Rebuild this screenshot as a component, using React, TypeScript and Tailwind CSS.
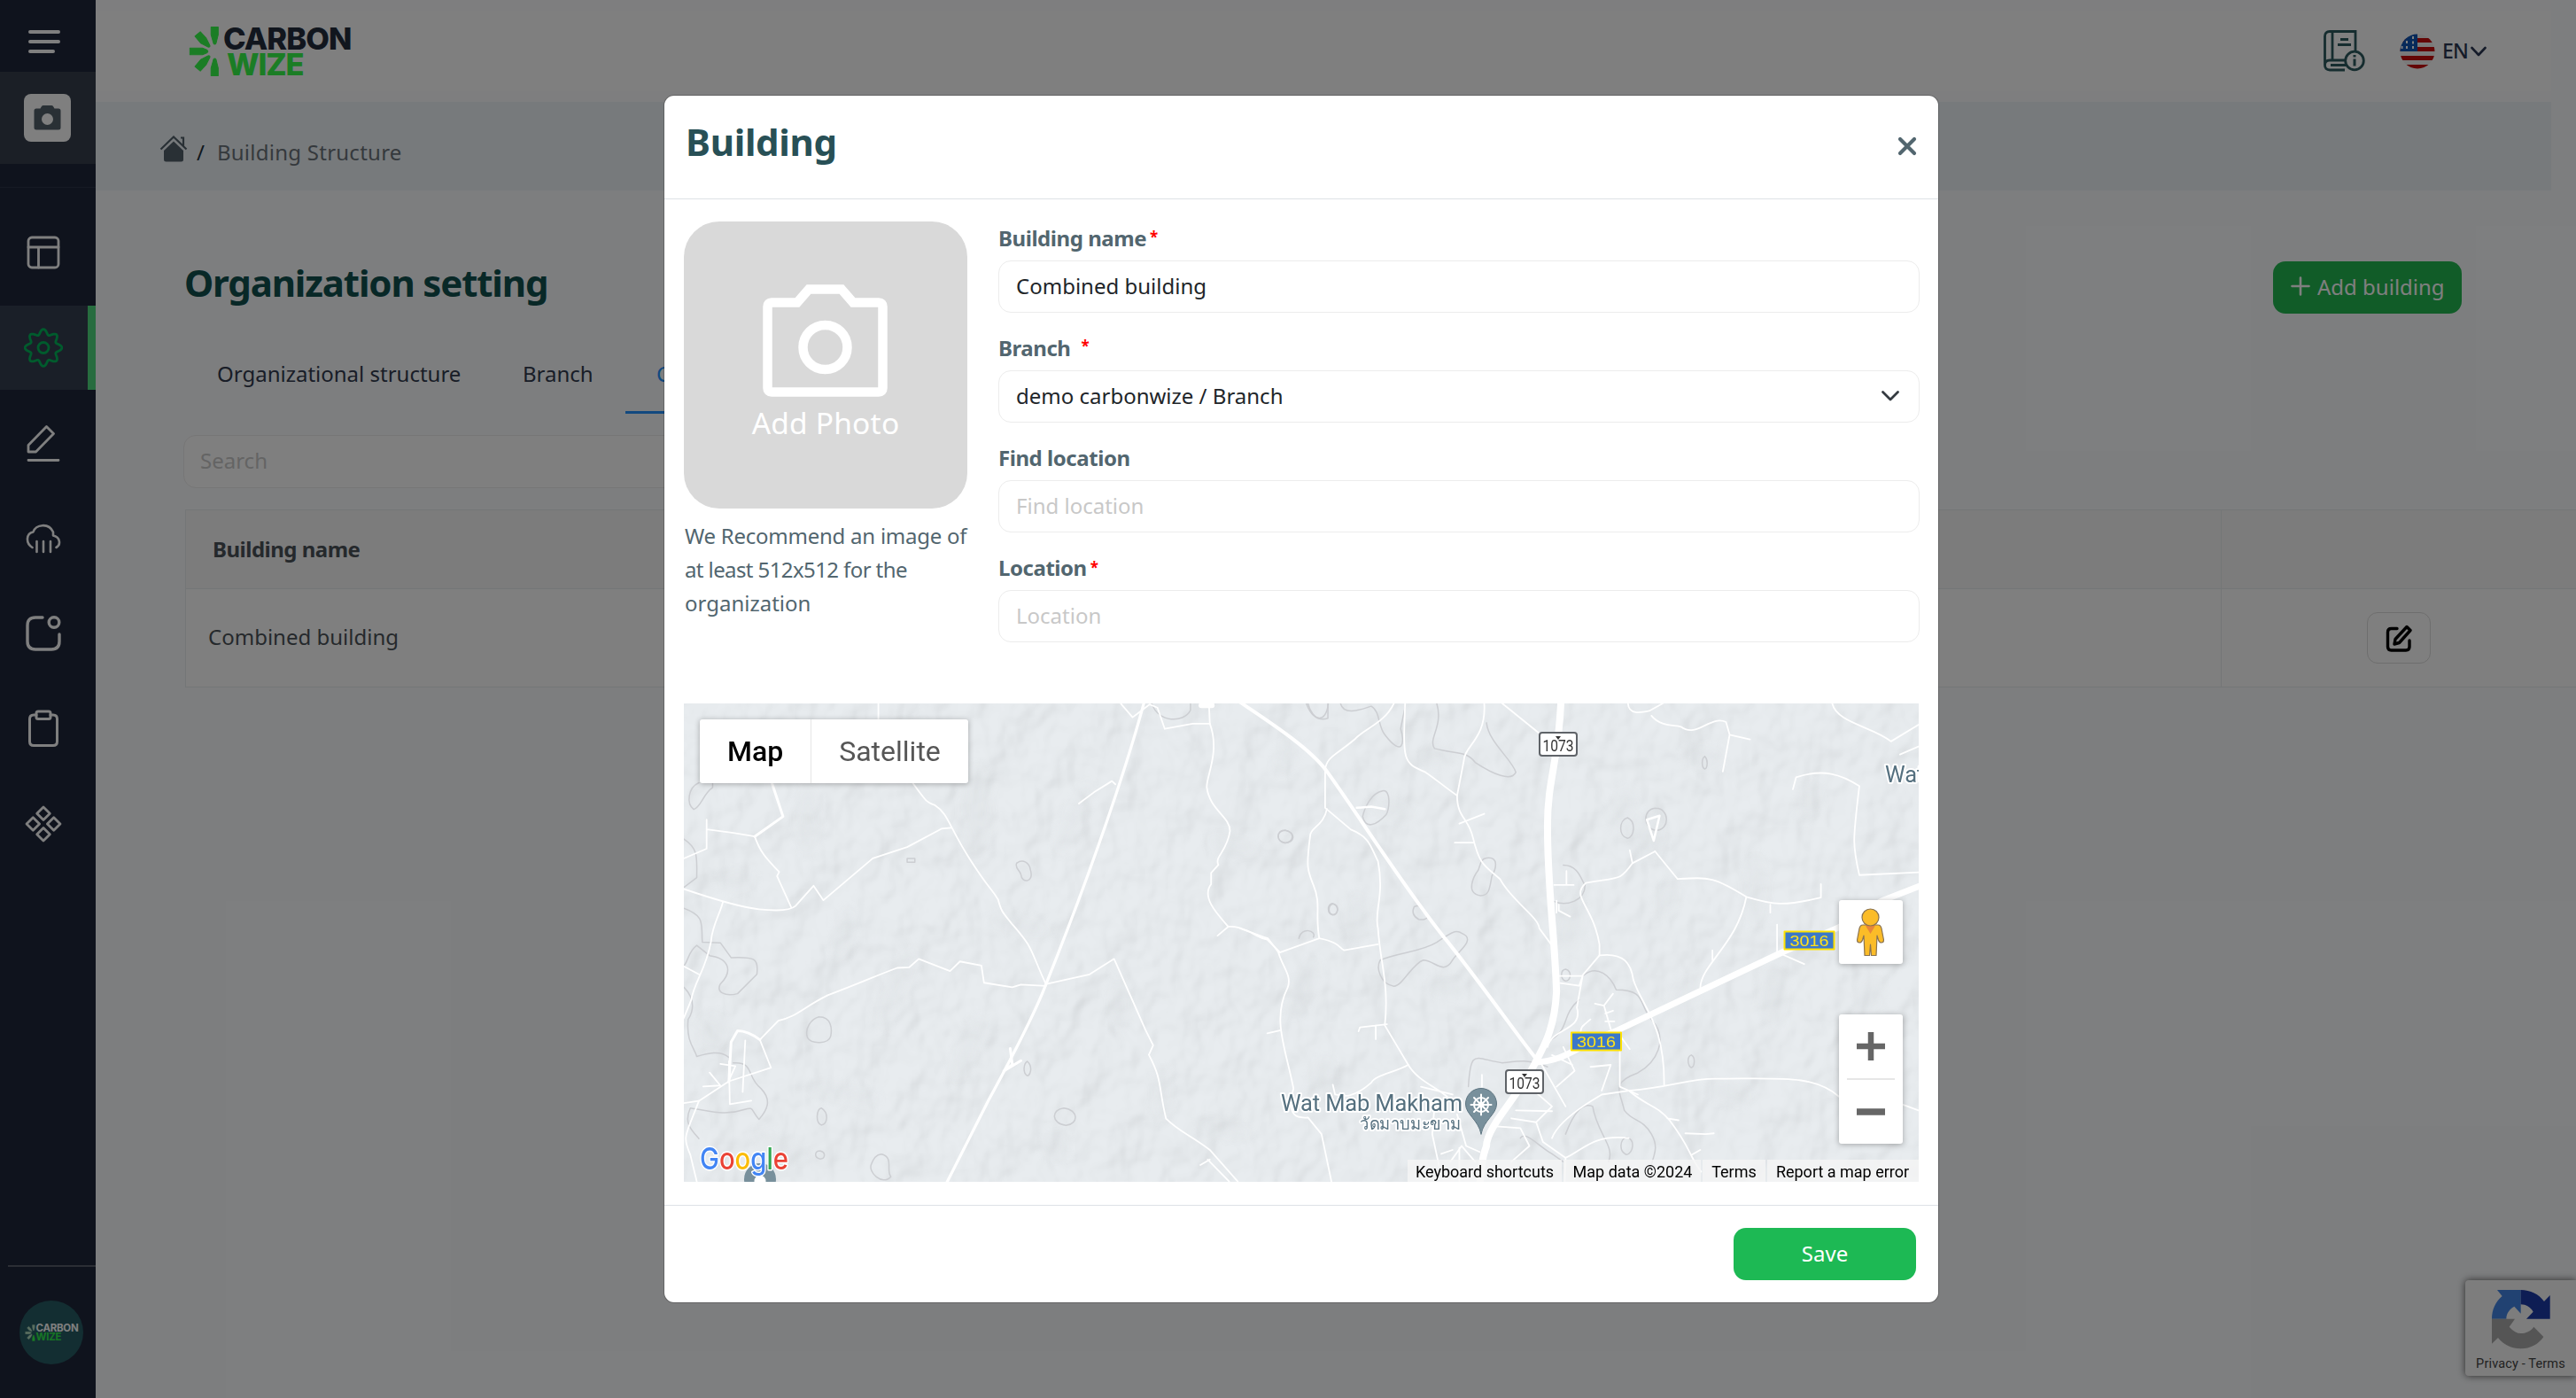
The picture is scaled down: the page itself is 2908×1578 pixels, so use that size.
import type { ReactNode } from "react";

/* ---------- logo ---------- */
const PETAL = "M115 62h24v26l-7 28a4.500 4.500 0 0 1-9 0l-8-28z";

function PetalMark({ className, top }: { className: string; top: string }) {
  return (
    <svg viewBox="40 58 104 172" className={className}>
      <g strokeWidth="3" strokeLinejoin="round" fill={top} stroke={top}>
        <path d={PETAL} />
        <path d="M61 93l18-15 20 22 12 24a4 4 0 0 1-6 5l-24-12z" />
        <path d="M44 133h42l15 6c5 3 5 7 0 10l-15 6H44z" />
        <path d="M61 195l18 15 20-22 12-24a4 4 0 0 0-6-5l-24 12z" />
      </g>
      <path d="M115 226h24v-26l-7-28a4.500 4.500 0 0 0-9 0l-8 28z" fill="#37fa4b" stroke="#37fa4b" strokeWidth="3" strokeLinejoin="round" />
    </svg>
  );
}

/* ---------- sidebar icons ---------- */
const gearPath = (() => {
  const pts: string[] = [];
  for (let i = 0; i < 160; i++) {
    const t = (i / 160) * Math.PI * 2;
    const r = 18 + 2.9 * Math.cos(8 * t);
    pts.push(`${(22 + r * Math.sin(t)).toFixed(2)} ${(22.5 - r * Math.cos(t)).toFixed(2)}`);
  }
  return `M${pts.join("L")}Z`;
})();

function Glyph({ w, h, sw = 3, children, className = "" }: { w: number; h: number; sw?: number; children: ReactNode; className?: string }) {
  return (
    <svg width={w} height={h} viewBox={`0 0 ${w} ${h}`} fill="none" stroke="currentColor" strokeWidth={sw} strokeLinecap="round" strokeLinejoin="round" className={className}>
      {children}
    </svg>
  );
}

const navItems: { active?: boolean; icon: ReactNode }[] = [
  {
    icon: (
      <Glyph w={38} h={38} sw={2.8}>
        <rect x="2" y="2" width="34" height="34" rx="4" />
        <path d="M2 13h34M13.500 13v23" />
      </Glyph>
    ),
  },
  {
    active: true,
    icon: (
      <Glyph w={44} h={45} sw={2.8}>
        <path d={gearPath} />
        <circle cx="22" cy="22.500" r="6" />
      </Glyph>
    ),
  },
  {
    icon: (
      <Glyph w={38} h={43} sw={2.800}>
        <path d="M2 23.500L22.500 2.500l8 8L10.500 31H2zM2 40.500h34" />
      </Glyph>
    ),
  },
  {
    icon: (
      <Glyph w={40} h={34} sw={2.600}>
        <path d="M7.500 27C-.500 22 .500 11 8.500 9.500 11 1 26 -1.500 31 9.500v4C39 15 40 24 34.500 27M12.500 20v12M20 20v12M28 20v12" />
      </Glyph>
    ),
  },
  {
    icon: (
      <Glyph w={42} h={42} sw={3.400}>
        <path d="M20 3H12Q3 3 3 12v18q0 9 9 9h18q9 0 9-9V22" />
        <circle cx="33" cy="8.500" r="5.800" />
      </Glyph>
    ),
  },
  {
    icon: (
      <Glyph w={36} h={43} sw={3}>
        <path d="M10 6H7q-4.500 0-4.500 4.500V36q0 4.500 4.500 4.500h22q4.500 0 4.500-4.500V10.500Q33.500 6 29 6h-3" />
        <rect x="10" y="2" width="16" height="8.500" rx="2" />
      </Glyph>
    ),
  },
  {
    icon: (
      <Glyph w={42} h={42} sw={2.800}>
        <path d="M21 2l7.300 7.300L21 16.600l-7.300-7.300zM21 25.400l7.300 7.300L21 40l-7.300-7.300zM9.300 13.700l7.300 7.300-7.300 7.300L2 21zM32.700 13.700L40 21l-7.300 7.300-7.300-7.300z" />
      </Glyph>
    ),
  },
];

function Sidebar() {
  return (
    <aside className="flex h-full w-[108px] shrink-0 flex-col bg-[#1f273b] text-white">
      <div className="flex h-[81px] items-center pl-[31px] pt-3">
        <Glyph w={38} h={28} sw={4}>
          <path d="M3 3h32M3 14h32M3 25h26" />
        </Glyph>
      </div>
      <div className="flex h-[104px] items-center bg-[#363f4d] pl-[27px]">
        <div className="flex h-[54px] w-[53px] items-center justify-center rounded-lg bg-white">
          <svg width="31" height="28" viewBox="0 0 31 28" fill="#52616b">
            <path fillRule="evenodd" d="M11 0h9q1.500 0 2 1l1.500 2.500H28q2.500 0 2.500 2.500v19q0 2.500-2.500 2.500H3Q.5 27.500.5 25V6Q.5 3.500 3 3.500h4.500L9 1q.5-1 2-1zM15.500 9a6.500 6.500 0 1 0 0 13 6.500 6.500 0 0 0 0-13z" />
          </svg>
        </div>
      </div>
      <div className="mt-[26px] h-px bg-[#2c3548]" />
      <nav className="mt-[19px] flex flex-col">
        {navItems.map((n, i) => (
          <div
            key={i}
            className={
              n.active
                ? "mb-[7px] mt-[6px] flex h-[95px] items-center justify-center border-r-[9px] border-[#4ed97e] bg-[#353f50] pr-px text-[#00b65a]"
                : "flex h-[107.500px] items-center justify-center pr-[10px]"
            }
          >
            {n.icon}
          </div>
        ))}
      </nav>
      <div className="ml-[9px] mt-auto h-0.5 bg-[#565c6b]" />
      <div className="mb-[38px] ml-[22px] mt-[38px] flex h-[72px] w-[72px] items-center justify-center rounded-full bg-[#265d64]">
        <PetalMark className="mr-px h-[19px] w-[12px]" top="#b4ddc0" />
        <div className="flex flex-col font-[Inter] text-[11.500px] font-bold leading-[10px] tracking-tight">
          <span>CARBON</span>
          <span className="text-[#2ee94b]">WIZE</span>
        </div>
      </div>
    </aside>
  );
}

/* ---------- top bar ---------- */
function TopBar() {
  return (
    <header className="mr-7 flex h-[115px] items-center border-b-[12px] border-t-[12px] border-[#fcfdff] bg-white pl-[105px] pr-[72px]">
      <PetalMark className="h-[58px] w-[35px]" top="#37fa4b" />
      <div className="ml-1 flex flex-col font-[Inter] text-[34.500px] font-extrabold leading-[29px]">
        <span className="tracking-[-0.900px] text-[#222d3d]">CARBON</span>
        <span className="pl-1 tracking-[-1.100px] text-[#37fa4b]">WIZE</span>
      </div>
      <svg width="47" height="47" viewBox="0 0 47 47" fill="none" stroke="#2c5a5f" strokeWidth="2.800" className="ml-auto">
        <path d="M24 45H7q-5.500 0-5.500-5.500V7Q1.500 1.500 7 1.500h29V23M10 1.500V34M1.500 39.500Q1.500 34 7 34h17M8 39.500h17M19 10.500h9M16 16.500h15" />
        <circle cx="35" cy="34.500" r="10.300" />
        <path d="M35 32.500v8M35 28v2.500" strokeWidth="3" />
      </svg>
      <svg width="40" height="40" viewBox="0 0 40 40" className="ml-[39px]">
        <clipPath id="flag">
          <circle cx="20" cy="20" r="19.500" />
        </clipPath>
        <g clipPath="url(#flag)">
          <rect width="40" height="40" fill="#f4f4f4" />
          <path d="M0 5h40v5H0zM0 15h40v5H0zM0 25h40v5H0zM0 35h40v5H0z" fill="#c90d0d" />
          <rect width="20" height="20" fill="#0f55b4" />
          <path d="M7 9.500h2M1.500 15.500h2M7 15.500h2M14 4.500h2M14 10h2M14 15.500h2" stroke="#fff" strokeWidth="2.800" />
        </g>
      </svg>
      <span className="ml-2 text-[23px] font-medium tracking-[-0.800px] text-[#2b3752]">EN</span>
      <Glyph w={20} h={14} sw={2.600} className="ml-0.5 text-[#2b3752]">
        <path d="M2.500 3l7.500 8 7.500-8" />
      </Glyph>
    </header>
  );
}

/* ---------- page behind the dialog ---------- */
function Page() {
  return (
    <main className="flex min-w-0 flex-1 flex-col bg-[#fbfdff]">
      <TopBar />
      <div className="mr-7 flex h-[100px] items-center bg-[#eff5f9] pl-[72px] pt-3.5 text-2xl">
        <svg width="32" height="30" viewBox="0 0 32 30" fill="#52616b" className="-mt-2">
          <path d="M16 6.500L27 17v10q0 2.500-2.500 2.500h-17Q5 29.500 5 27V17z" />
          <path d="M1.500 15.500L16 1.500l14.500 14M24 2.500h3v9" fill="none" stroke="#52616b" strokeWidth="2.200" />
        </svg>
        <span className="ml-2.5 text-[#22303c]">/</span>
        <span className="ml-3.5 tracking-[0.250px] text-[#6b737a]">Building Structure</span>
      </div>
      <div className="flex items-start justify-between pl-[100px] pr-[129px] pt-[80px]">
        <h1 className="-mt-[9px] text-[42px] font-bold leading-[66px] tracking-[-1.150px] text-[#11504f]">Organization setting</h1>
        <button className="flex h-[59px] w-[213px] items-center rounded-[14px] bg-[#23b951] pb-0.5 pl-5 text-2xl text-white">
          <Glyph w={22} h={22} sw={2.600} className="-mt-0.5">
            <path d="M1.500 11h19M11 1.500v19" />
          </Glyph>
          <span className="ml-2 whitespace-nowrap">Add building</span>
        </button>
      </div>
      <div className="mt-[28px] flex pl-[115px] text-2xl leading-[68px] text-[#323a4e]">
        <span className="h-[85px] w-[300px] pl-[22px] pt-1.5">Organizational structure</span>
        <span className="h-[85px] w-[183px] pl-[67px] pt-1.5">Branch</span>
        <span className="h-[85px] w-[260px] border-b-[3px] border-[#2492ff] pl-[35px] pt-1.5 text-[#2492ff]">Combined building</span>
      </div>
      <div className="ml-[99px] mt-[24px] flex h-[60px] w-[760px] items-center rounded-[14px] border border-[#ececec] bg-white pb-0.5 pl-[18px] text-2xl text-[#c9c9c9]">Search</div>
      <div className="ml-[101px] mt-[24px] grid grid-cols-[2298px_1fr] border-l border-t border-[#e9edef] text-2xl text-[#4b5258]">
        <div className="h-[89px] border-b border-r border-[#e9edef] bg-[#f8f8f8] pl-[30px] font-bold leading-[87px] tracking-[-0.500px]">Building name</div>
        <div className="h-[89px] border-b border-[#e9edef] bg-[#f8f8f8]" />
        <div className="h-[111px] border-b border-r border-[#e9edef] bg-white pl-[25px] leading-[108px]">Combined building</div>
        <div className="flex h-[111px] items-center justify-center border-b border-[#e9edef] bg-white">
          <div className="flex h-[58px] w-[72px] items-center justify-center rounded-xl border border-[#dcdcdc] text-black">
            <Glyph w={30} h={31} sw={3.400}>
              <path d="M13 4.500H6.500Q2.500 4.500 2.500 8.500v16.500q0 4 4 4h16.500q4 0 4-4v-7" />
              <path d="M24 2.500l4 4L15.500 20.500l-5.500 1.500 1-5.500z" />
            </Glyph>
          </div>
        </div>
      </div>
    </main>
  );
}

/* ---------- map ---------- */
const westRoads = [
  "M25 615C80 640 160 672 200 678C250 685 275 680 285 668L327 605L350 650L465 520L545 485L625 428L648 425",
  "M558 286C590 345 590 345 610 355C640 380 642 420 690 520S740 610 757 648C765 690 770 690 790 725C840 800 830 800 868 910",
  "M190 452C205 510 225 530 247 562L242 575L275 672M190 452C140 440 110 435 78 430V490L25 520M78 430V400",
  "M116 655C110 690 90 730 88 780C75 870 50 900 42 960L25 1015M25 855L60 880",
  "M868 916L810 912L790 920L724 906L718 853L668 840L645 870L572 832L550 858L522 860C480 880 440 905 360 945C300 985 290 1010 245 1024L202 1083L228 1170L130 1212L60 1273L25 1280",
  "M870 910L970 880L1027 832L1100 1052L1118 1100L1108 1130C1140 1210 1130 1230 1148 1328C1180 1370 1200 1375 1250 1425L1315 1523",
  "M130 1150L132 1283L182 1272M168 1085L162 1245M110 1158L145 1165L128 1215M70 1228L110 1225L85 1185M60 1273C30 1380 20 1380 40 1440L55 1523",
  "M945 350L980 315L1022 280L1030 290M1043 40L1070 82L1110 42L1128 52L1145 118L1210 102L1250 102L1248 40",
  "M1250 102C1275 190 1240 270 1243 300C1250 370 1297 390 1297 435C1290 500 1260 515 1270 540L1253 565V600C1230 640 1265 690 1293 732L1268 760M1293 732C1320 728 1340 750 1385 768L1410 812",
  "M478 40V90M1250 1455L1228 1472M1245 1455L1295 1523",
];
const westMinorBold = ["M230 286L256 390L190 452", "M130 1212L135 1090L150 1055Q175 1055 202 1083", "M785 1110L790 1160L770 1180L810 1148"];
const eastRoads = [
  "M340 31C320 80 275 95 255 120C215 160 190 165 188 200V295L245 350C290 370 290 400 305 430C320 520 295 560 305 600C310 690 330 740 320 845L372 945C400 1000 470 1010 475 1060",
  "M192 298C185 340 155 345 155 365C145 450 150 455 162 490C180 540 165 560 175 625L85 662C95 700 115 720 105 750C70 830 100 900 118 1005C100 1080 130 1080 150 1078L180 1120L202 1240",
  "M175 625C220 635 220 650 230 655L305 640M0 600C40 615 40 625 60 628L88 660M60 865L88 858",
  "M365 31C360 180 360 180 410 205C430 220 450 240 480 264C480 320 505 320 515 370C530 440 540 440 575 475C600 530 660 570 662 600L688 640",
  "M540 31C545 120 495 140 495 175L480 264M485 335L540 310M475 383L517 383M580 31L660 105",
  "M858 31C860 60 885 55 905 50L935 31M910 62C930 90 960 85 975 90C1010 120 1040 60 1075 78L1083 110L1128 122M1083 110L1068 203",
  "M1310 31C1320 80 1400 90 1440 127L1501 85M1460 160L1501 140M1223 248L1230 218C1290 195 1330 210 1370 240C1355 380 1355 390 1370 465L1501 458",
  "M918 405L868 435L862 402M868 435C840 480 840 470 765 485C730 520 780 540 795 640V668L758 718L745 800C760 860 690 850 680 900M705 720H758L750 745L708 738",
  "M918 405L968 475C1040 470 1050 470 1120 520C1180 540 1200 545 1285 522V488M1120 520C1100 640 1020 690 1018 750M1173 540V560M1188 590V660L1248 690M1045 655V680",
  "M795 668C850 660 865 690 870 730C890 800 940 840 938 998M860 1010C960 1000 990 980 1050 980C1200 980 1270 970 1325 1025M1465 1045L1501 1060M860 1010L800 1020C740 1060 700 1100 690 1130",
  "M860 1010C900 1050 920 1045 950 1085C1000 1160 990 1170 1020 1215M985 1118L1030 1120L1048 1118M970 1085L945 1080M1018 1160L1000 1172",
  "M372 945C340 965 300 970 290 990C250 1030 230 1025 210 1020L205 995M262 860L265 850L325 842M300 845V880",
  "M825 765L805 795L820 855M785 790L805 795M808 815L825 808M808 835H828M775 830C755 850 755 845 752 870M840 870L862 905M840 905V1000L880 1020M775 950L820 945L800 1010",
  "M722 455V490M695 490H738M705 540V555L730 570M700 530V560M715 900L740 960L700 1000M690 920L735 945M660 930L720 1050M640 1000L690 1050L655 1090L600 1080M655 1090L670 1140L720 1180L718 1240M720 1180C760 1160 780 1120 860 1130",
  "M560 1100L620 1105L640 1150L600 1190M480 1070L500 1150L530 1165M465 1190L490 1150L520 1190M430 1050L425 1120L440 1200M400 1000L470 1020M485 1155V1240M445 1170L470 1160M535 970V1000M610 1060L690 1062",
];
const contoursWest = [
  "M60 285C35 300 30 350 48 368C65 360 70 320 92 300V285",
  "M25 460C60 490 55 520 55 580L25 610M25 675C75 700 65 720 68 780L110 782L135 828C190 825 200 830 195 880L150 940C120 950 100 935 110 910C140 870 130 830 85 822L55 790C35 810 38 830 25 855",
  "M25 920C55 960 45 1000 35 1020C30 1090 50 1110 55 1135C80 1125 110 1115 130 1138M140 1155C190 1150 170 1200 205 1235C230 1270 220 1300 200 1330C180 1300 190 1290 165 1300C120 1320 90 1305 40 1295C25 1340 40 1360 60 1390",
  "M340 1012c30 0 30 40 27 60c-5 25-45 25-54 5c-8-30 10-60 27-65M345 1295c18 15 15 50 0 53c-15-10-10-50 0-53M910 1295c35 5 35 50 5 54c-35-5-35-50-5-54",
  "M485 1438c30 10 10 50 22 70c-20 30-55-15-45-40c5-15 10-28 23-30M800 535c15-15 30 0 32 20c10 40-20 45-22 15c-2-12-15-20-10-35M825 1150c15 20 5 45 0 45c-12-10-8-40 0-45M342 1428c15 5 12 25 0 25c-15-5-12-25 0-25",
  "M1425 432c25 5 20 40 0 40c-22-5-20-40 0-40M1535 660c18 5 15 35 0 35c-12-5-12-30 0-35M545 520h18v12h-18z",
  "M1115 40C1130 100 1190 100 1205 60V40M1475 40C1485 75 1500 95 1525 85V40",
];
const contoursEast = [
  "M150 31C160 75 190 85 195 31M222 31C230 65 270 45 290 38C310 50 305 90 320 110C360 170 365 130 355 95L365 40",
  "M435 31C450 90 415 120 430 145C480 160 500 150 520 180C560 210 600 230 610 205C600 170 550 130 545 80",
  "M315 252c20-5 15 50 8 60c-20 25-45 40-52 5c5-25 20-60 44-65M100 352c25 8 20 30 0 32c-22-5-20-30 0-32M205 538c15 5 12 28 0 28c-12-5-10-25 0-28",
  "M545 422c30-5 20 30 12 45c-5 30-5 50-25 50c-35-5-15-50-5-65c5-15 5-28 18-30M385 545c15-8 10 5 28 22c5 10-10 12-18 10c-12-8-15-20-10-32",
  "M340 746C310 740 300 700 310 680C350 660 400 660 435 635C480 600 480 605 495 615C520 630 480 660 470 680C450 720 430 680 405 680C380 690 360 745 340 746",
  "M130 625c5-30 40-20 32-3M715 440c35 0 40 40 48 50c0 40-40 55-68 42M857 320c20 10 15 50 0 52c-20-5-20-45 0-52M920 296c30 0 32 55 0 56c-30-5-30-55 0-56M1028 165c8 8 6 30 0 32c-8-5-7-28 0-32",
  "M720 703c15 5 12 28 0 30c-12-5-12-28 0-30M760 718C790 690 820 720 832 755C900 755 880 790 910 830C950 880 920 940 880 965C820 990 840 1010 850 1060C870 1090 890 1080 910 1120C930 1160 910 1180 905 1220",
  "M750 780C710 820 730 850 690 880M505 1000C510 900 520 930 580 940C620 935 640 930 680 950M998 920c10 5 8 30 0 32c-8-5-10-28 0-32M855 1128c20 5 15 40 0 44c-18-8-15-40 0-44M720 1120C740 1060 760 1040 780 1050C790 1120 830 1150 815 1190M620 1130C630 1110 660 1150 690 1170L715 1190",
];
const shade: [number, number, number, number][] = [
  [140, 130, 12, 40], [180, 260, 8, 30], [240, 320, 10, 50], [330, 120, 16, 50], [380, 250, 34, 8], [320, 390, 10, 40], [490, 340, 8, 30], [620, 160, 30, 8], [700, 320, 10, 34],
  [60, 200, 20, 10], [180, 440, 40, 8], [440, 130, 8, 44], [540, 440, 8, 30], [610, 480, 30, 8], [800, 120, 26, 9], [760, 240, 10, 26], [860, 320, 20, 10], [720, 420, 12, 20],
  [850, 60, 16, 10], [1060, 120, 12, 26], [1110, 220, 10, 20], [1210, 210, 12, 40], [1270, 110, 10, 20], [1130, 330, 12, 26], [1230, 330, 14, 30], [1180, 440, 24, 9], [1060, 420, 30, 20],
  [1090, 150, 16, 24], [1000, 250, 14, 30], [1340, 330, 12, 20], [1150, 60, 22, 10], [30, 370, 16, 20], [110, 500, 34, 8], [420, 500, 12, 14], [260, 30, 24, 8], [680, 60, 10, 20],
];

function RouteWhite({ x, y }: { x: number; y: number }) {
  return (
    <g>
      <rect x={x} y={y} width="42" height="26" rx="3" fill="#fff" stroke="#5f6368" strokeWidth="2" />
      <path d={`M${x + 18} ${y + 4}h6l-3 4z`} fill="#333" />
      <text x={x + 21} y={y + 21} textAnchor="middle" textLength="35" lengthAdjust="spacingAndGlyphs" className="fill-[#333] font-[Roboto] text-[18px]">1073</text>
    </g>
  );
}

function RouteBlue({ x, y }: { x: number; y: number }) {
  return (
    <g>
      <rect x={x} y={y} width="56" height="20" fill="#3b78c9" stroke="#ffe100" strokeWidth="2" />
      <text x={x + 28} y={y + 16} textAnchor="middle" textLength="44" lengthAdjust="spacingAndGlyphs" className="fill-[#ffe11a] font-['Liberation_Sans'] text-[17px]">3016</text>
    </g>
  );
}

function MapCanvas() {
  return (
    <svg width="1394" height="540" viewBox="0 0 1394 540" className="block" fill="none" strokeLinecap="round" strokeLinejoin="round">
      <defs>
        <filter id="soft" x="-50%" y="-50%" width="200%" height="200%">
          <feGaussianBlur stdDeviation="6" />
        </filter>
        <filter id="relief" x="0" y="0" width="100%" height="100%">
          <feTurbulence type="fractalNoise" baseFrequency="0.022 0.018" numOctaves="3" seed="8" result="n" />
          <feDiffuseLighting in="n" surfaceScale="9" diffuseConstant="1.08" lightingColor="#e8ecef">
            <feDistantLight azimuth="225" elevation="68" />
          </feDiffuseLighting>
        </filter>
      </defs>
      <rect width="1394" height="540" fill="#e6eaed" />
      <rect width="1394" height="540" filter="url(#relief)" opacity="0.28" />
      <g filter="url(#soft)" fill="#d6dadd" opacity="0.22">
        {shade.map(([cx, cy, rx, ry], i) => (
          <ellipse key={i} cx={cx} cy={cy} rx={rx} ry={ry} transform={`rotate(${(i % 3) * 12} ${cx} ${cy})`} />
        ))}
      </g>
      <g transform="scale(0.4847 0.3636) translate(-25 -39)">
        {contoursWest.map((d, i) => (
          <path key={i} d={d} stroke="#ccced2" strokeWidth="1.500" vectorEffect="non-scaling-stroke" />
        ))}
        {westRoads.map((d, i) => (
          <path key={i} d={d} stroke="#fff" strokeWidth="1.800" vectorEffect="non-scaling-stroke" />
        ))}
        {westMinorBold.map((d, i) => (
          <path key={i} d={d} stroke="#fff" strokeWidth="3" vectorEffect="non-scaling-stroke" />
        ))}
        <path d="M1098 30C1060 220 980 540 868 912C840 1010 780 1160 735 1270L636 1530" stroke="#fff" strokeWidth="3.200" vectorEffect="non-scaling-stroke" />
        <path d="M1230 45h25" stroke="#fff" strokeWidth="6" vectorEffect="non-scaling-stroke" />
      </g>
      <g transform="translate(628 0) scale(0.5102 0.4464) translate(0 -31)">
        {contoursEast.map((d, i) => (
          <path key={i} d={d} stroke="#ccced2" strokeWidth="1.500" vectorEffect="non-scaling-stroke" />
        ))}
        {eastRoads.map((d, i) => (
          <path key={i} d={d} stroke="#fff" strokeWidth="1.800" vectorEffect="non-scaling-stroke" />
        ))}
        <path d="M258 295L290 292L320 298M915 378L928 315L900 325L915 378" stroke="#fff" strokeWidth="2.500" vectorEffect="non-scaling-stroke" />
        <path d="M0 28C60 75 150 140 190 200C260 310 370 510 460 635C540 750 600 850 655 930" stroke="#fff" strokeWidth="4" vectorEffect="non-scaling-stroke" />
        <path d="M710 20C705 180 680 220 680 340C680 500 695 600 700 760C695 860 670 900 655 935C620 1020 545 1100 545 1150C535 1180 535 1200 530 1250" stroke="#fff" strokeWidth="8" vectorEffect="non-scaling-stroke" />
        <path d="M655 938C720 935 740 900 830 860L1200 660L1325 597L1420 530L1510 490" stroke="#fff" strokeWidth="7" vectorEffect="non-scaling-stroke" />
      </g>

      <RouteWhite x={966} y={33} />
      <RouteWhite x={928} y={414} />
      <RouteBlue x={1002} y={371.500} />
      <RouteBlue x={1242.500} y={257.500} />

      <path d="M900 486C897 470 882.500 464 882.500 452A17.500 17.500 0 0 1 917.500 452C917.500 464 903 470 900 486z" fill="#78909c" stroke="#5d7480" strokeWidth="1" />
      <g stroke="#fff" strokeWidth="2">
        <circle cx="900" cy="453" r="8" />
        <circle cx="900" cy="453" r="2.500" />
        <path d="M900 441.500v23M888.500 453h23M892 445l16 16M908 445l-16 16" />
      </g>
      <g stroke="#fff" strokeWidth="4">
        <text x="674" y="460" textLength="205" className="fill-[#55707f] font-[Roboto] text-[25.500px] [paint-order:stroke]">Wat Mab Makham</text>
        <text x="763" y="481" textLength="115" lengthAdjust="spacingAndGlyphs" className="fill-[#55707f] font-['Noto_Sans'] text-[19px] [paint-order:stroke]">วัดมาบมะขาม</text>
        <text x="1356" y="89" className="fill-[#55707f] font-[Roboto] text-[25.500px] [paint-order:stroke]">Wat</text>
      </g>
      <circle cx="86" cy="537" r="18" fill="#78909c" />
      <circle cx="86" cy="539" r="6.500" fill="#fff" />
      <text x="18" y="526" textLength="100" lengthAdjust="spacingAndGlyphs" stroke="#fff" strokeWidth="3" className="font-[Inter] text-[34px] font-medium [paint-order:stroke]">
        <tspan fill="#4285f4">G</tspan><tspan fill="#ea4335">o</tspan><tspan fill="#fbbc05">o</tspan><tspan fill="#4285f4">g</tspan><tspan fill="#34a853">l</tspan><tspan fill="#ea4335">e</tspan>
      </text>
    </svg>
  );
}

function MapPanel() {
  return (
    <div className="relative mt-[69px] h-[540px] w-[1394px] overflow-hidden font-[Roboto]">
      <MapCanvas />
      <div className="absolute left-[18px] top-[18px] flex h-[72px] w-[303px] overflow-hidden rounded-[3px] bg-white text-[32px] leading-[72px] shadow-[0_1px_6px_rgba(0,0,0,0.3)]">
        <span className="w-[126px] border-r border-[#e6e6e6] text-center font-medium text-black">Map</span>
        <span className="flex-1 text-center text-[#565656]">Satellite</span>
      </div>
      <div className="absolute right-[18px] top-[222px] h-[72px] w-[72px] rounded-[3px] bg-white shadow-[0_1px_6px_rgba(0,0,0,0.3)]">
        <svg width="72" height="72" viewBox="0 0 72 72" stroke="#8a7350" strokeWidth="1.200" strokeLinejoin="round">
          <path d="M27 28h17q3 0 4 4l2.500 13q0 3-2.500 3t-3.500-3L43 40l-1 22.500h-5.500L35.500 50l-1 12.500H29L28 40l-1.500 5q-1 3-3.500 3t-2.500-3L23 32q1-4 4-4z" fill="#fbbc28" />
          <path d="M29.500 28h12l-6 10z" fill="#e8863a" stroke="none" />
          <circle cx="35.500" cy="19.500" r="9.500" fill="#fbbc28" />
        </svg>
      </div>
      <div className="absolute right-[18px] top-[351px] flex h-[146px] w-[72px] flex-col items-center rounded-[3px] bg-white shadow-[0_1px_6px_rgba(0,0,0,0.3)]">
        <svg width="72" height="72" viewBox="0 0 72 72" stroke="#666" strokeWidth="6.500">
          <path d="M20 36h32M36 20v32" />
        </svg>
        <div className="h-0.5 w-[54px] bg-[#e6e6e6]" />
        <svg width="72" height="72" viewBox="0 0 72 72" stroke="#666" strokeWidth="7.500">
          <path d="M20 36h32" />
        </svg>
      </div>
      <div className="absolute bottom-0 right-0 flex h-[25px] gap-0.5 whitespace-nowrap text-center text-[18px] leading-[28px] text-black">
        <span className="w-[174px] bg-[#f5f5f5]/80">Keyboard shortcuts</span>
        <span className="w-[155px] bg-[#f5f5f5]/80 pl-px">Map data ©2024</span>
        <span className="w-[71px] bg-[#f5f5f5]/80">Terms</span>
        <span className="w-[171px] bg-[#f5f5f5]/80 pr-px">Report a map error</span>
      </div>
    </div>
  );
}

/* ---------- dialog ---------- */
function Field({ label, star, value, muted, select }: { label: string; star?: string; value: string; muted?: boolean; select?: boolean }) {
  return (
    <div>
      <div className="flex h-[38px] text-2xl font-bold leading-[38px] tracking-[-0.450px] text-[#52666f]">
        {label}
        {star && <span className={star}>*</span>}
      </div>
      <div className="-mr-px mt-[6px] flex h-[59px] items-center justify-between rounded-[14px] border border-[#ececec] pb-0.5 pl-[19px] pr-[21px] text-2xl leading-[54px]">
        <span className={muted ? "text-[#c8c8c8]" : "text-[#212529]"}>{value}</span>
        {select && (
          <Glyph w={22} h={14} sw={2.800} className="text-[#343a40]">
            <path d="M2.500 2.500L11 11l8.500-8.500" />
          </Glyph>
        )}
      </div>
    </div>
  );
}

function Dialog() {
  return (
    <div className="w-[1438px] rounded-[11px] bg-white shadow-[0_0_0_1px_rgba(0,0,0,0.2)]">
      <div className="flex h-[117px] items-start justify-between border-b border-[#dee2e6] pl-6 pr-[24px] pt-5">
        <h2 className="text-[42px] font-bold leading-[64px] tracking-[-0.300px] text-[#285056]">Building</h2>
        <Glyph w={22} h={22} sw={4.200} className="mt-[26px] text-[#52666f]">
          <path d="M3 3l16 16M19 3L3 19" />
        </Glyph>
      </div>
      <div className="px-[22px] pb-[26px] pt-[25px]">
        <div className="flex">
          <div className="w-[355px] shrink-0">
            <div className="flex h-[324px] w-80 flex-col items-center rounded-[40px] bg-[#d9d9d9] pt-[71px]">
              <svg width="141" height="128" viewBox="0 0 141 128" fill="none" stroke="#fff" strokeWidth="10.500" className="-ml-0.5">
                <path d="M10 20.500H39L52 5.500H89l13 15h29q4.500 0 4.500 4.500v92q0 4.500-4.500 4.500H10q-4.500 0-4.500-4.500V25q0-4.500 4.500-4.500z" />
                <circle cx="70.500" cy="71" r="25" />
              </svg>
              <span className="text-[33.500px] leading-[56px] tracking-[0.200px] text-white">Add Photo</span>
            </div>
            <p className="mt-3 flex flex-col whitespace-nowrap pl-px text-2xl leading-[38px] text-[#52666f]">
              <span className="tracking-[-0.250px]">We Recommend an image of</span>
              <span className="tracking-[-0.600px]">at least 512x512 for the</span>
              <span>organization</span>
            </p>
          </div>
          <div className="flex flex-1 flex-col gap-[21px]">
            <Field label="Building name" star="ml-1 text-[17px] leading-[36px] text-[#ff0000]" value="Combined building" />
            <Field label="Branch" star="ml-3 text-[17px] leading-[34px] text-[#ff0000]" value="demo carbonwize / Branch" select />
            <Field label="Find location" value="Find location" muted />
            <Field label="Location" star="ml-1 text-[17px] leading-[38px] text-[#ff0000]" value="Location" muted />
          </div>
        </div>
        <MapPanel />
      </div>
      <div className="flex h-[110px] items-center justify-end border-t border-[#dee2e6] pr-[25px]">
        <button className="h-[59px] w-[206px] rounded-[14px] bg-[#1db954] pb-0.5 text-2xl text-white">Save</button>
      </div>
    </div>
  );
}

function CaptchaBadge() {
  return (
    <div className="absolute bottom-[25px] right-0 flex h-[108px] w-[125px] flex-col items-center rounded-l-[4px] bg-[#fafafa] pt-[9px] shadow-[0_0_9px_#555]">
      <svg width="68" height="70" viewBox="157 76 204 210" className="ml-px">
        <path d="M160 180C160 150 172 122 195 103L178 82H258V162L236 138C222 145 209 160 209 180Z" fill="#4285e4" />
        <path d="M258 82C290 82 320 97 337 121L357 100V180H277L300 156C292 141 275 131 258 131Z" fill="#1c3aa9" />
        <path d="M160 180H238L219 207C232 222 245 229 258 229C275 229 292 222 302 207L335 241C318 266 290 281 258 281C227 281 199 267 181 244L160 264Z" fill="#ababab" />
      </svg>
      <span className="mt-1.5 whitespace-nowrap font-[Roboto] text-[14.500px] leading-5 tracking-[0.150px] text-[#444]">Privacy - Terms</span>
    </div>
  );
}

export default function App() {
  return (
    <div className="relative flex h-[1578px] w-[2908px] overflow-hidden font-['Noto_Sans',sans-serif]">
      <Sidebar />
      <Page />
      <CaptchaBadge />
      <div className="absolute inset-0 flex items-start justify-center bg-black/50 pl-[30px] pt-[108px]">
        <Dialog />
      </div>
    </div>
  );
}
